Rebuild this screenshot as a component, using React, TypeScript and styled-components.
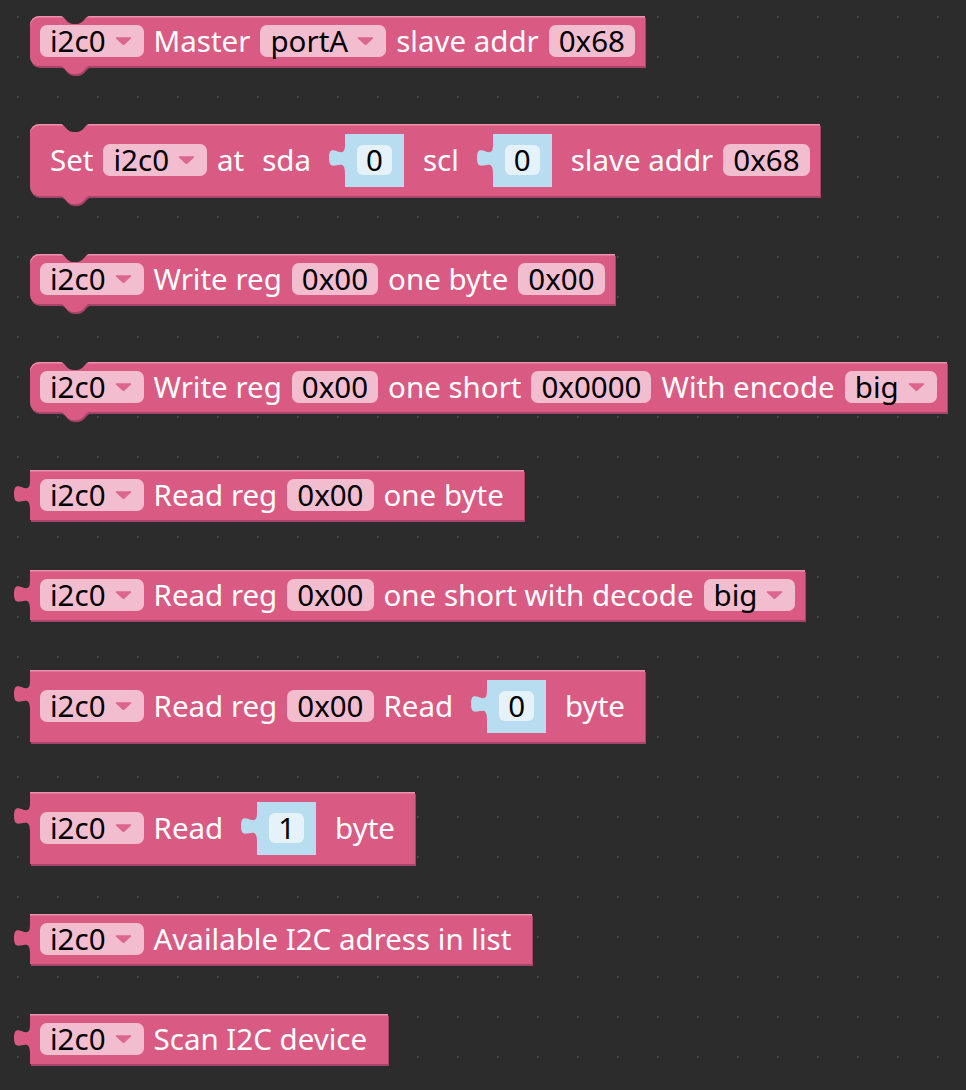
import React from "react";
import styled, { createGlobalStyle } from "styled-components";

const BG = "#2c2c2c";
const PINK = "#d95b84";
const PINK_LIGHT = "#ec91ae";
const PINK_DARK = "#a8446a";
const FIELD = "#f3bdd0";
const ARROW = "#dc6690";
const BLUE = "#b9ddf0";
const BLUE_FIELD = "#e6f2fa";
const FONT_SIZE = "29.5px";

const GlobalStyle = createGlobalStyle`
  html, body { margin: 0; padding: 0; background: ${BG}; }
  body { font-family: "Noto Sans", "Liberation Sans", sans-serif; }
  #root { width: 966px; height: 1090px; overflow: hidden; }
`;

const Workspace = styled.div`
  width: 966px;
  height: 1090px;
  box-sizing: border-box;
  background-color: ${BG};
  background-image: radial-gradient(circle, #474747 0.9px, transparent 1.3px);
  background-size: 40px 40px;
  background-position: -2px -3px;
  padding: 16px 0 0 30px;
  display: flex;
  flex-direction: column;
  align-items: flex-start;
  gap: 50px;
`;

type Kind = "statement" | "value";

const BlockBody = styled.div<{ $kind: Kind; $tall?: boolean; $padL: number; $padR: number }>`
  position: relative;
  display: flex;
  align-items: center;
  gap: 10px;
  height: ${(p) => (p.$tall ? 72 : 50)}px;
  padding: 0 ${(p) => p.$padR}px 0 ${(p) => p.$padL}px;
  background: ${PINK};
  border-radius: ${(p) => (p.$kind === "statement" ? "9px 0 0 9px" : "0")};
  box-shadow: inset 0 1.5px 0 ${PINK_LIGHT}, 1px 2px 0 ${PINK_DARK};
  margin-bottom: ${(p) => (p.$kind === "statement" ? 8 : 0)}px;
`;

const Notch = styled.svg`
  position: absolute;
  top: -1px;
  left: 28px;
  width: 34px;
  height: 10px;
`;

const BottomTab = styled.svg`
  position: absolute;
  bottom: -10px;
  left: 28px;
  width: 36px;
  height: 11px;
`;

const OutputTab = styled.svg`
  position: absolute;
  left: -17px;
  top: 11px;
  width: 18px;
  height: 30px;
`;

const Label = styled.span<{ $wide?: boolean }>`
  color: #ffffff;
  font-size: ${FONT_SIZE};
  line-height: 1;
  white-space: nowrap;
  margin-left: ${(p) => (p.$wide ? 8 : 0)}px;
`;

const FieldBox = styled.div<{ $drop?: boolean }>`
  display: flex;
  align-items: center;
  gap: 9px;
  height: 32px;
  padding: 0 ${(p) => (p.$drop ? 12 : 10)}px 0 10px;
  border-radius: 7px;
  background: ${FIELD};
  color: #000;
  font-size: ${FONT_SIZE};
  line-height: 1;
  white-space: nowrap;
`;

const Arrow = styled.svg`
  width: 17px;
  height: 8px;
  flex: none;
`;

const Slot = styled.div`
  position: relative;
  display: flex;
  align-items: center;
  height: 53px;
  padding: 0 12px;
  background: ${BLUE};
  margin-left: 24px;
  margin-right: 9px;
`;

const SlotTab = styled.svg`
  position: absolute;
  left: -17px;
  top: 11px;
  width: 18px;
  height: 30px;
`;

const SlotField = styled.div`
  display: flex;
  align-items: center;
  height: 30px;
  padding: 0 9px;
  border-radius: 6px;
  background: ${BLUE_FIELD};
  color: #000;
  font-size: ${FONT_SIZE};
  line-height: 1;
`;

const TAB_PATH = "M17,0 C17,18 1,-6 1,13 C1,31 17,9 17,28 Z";

const Dropdown: React.FC<{ text: string }> = ({ text }) => (
  <FieldBox $drop>
    <span>{text}</span>
    <Arrow viewBox="0 0 17 8">
      <path d="M1.5 1 L15.5 1 L8.5 7.5 Z" fill={ARROW} stroke={ARROW} strokeWidth="1.5" strokeLinejoin="round" />
    </Arrow>
  </FieldBox>
);

const Field: React.FC<{ text: string }> = ({ text }) => (
  <FieldBox>
    <span>{text}</span>
  </FieldBox>
);

const ValueInput: React.FC<{ text: string }> = ({ text }) => (
  <Slot>
    <SlotTab viewBox="0 0 18 30">
      <path d={TAB_PATH} fill={BLUE} />
    </SlotTab>
    <SlotField>{text}</SlotField>
  </Slot>
);

const Block: React.FC<{
  kind: Kind;
  tall?: boolean;
  padL?: number;
  padR?: number;
  children: React.ReactNode;
}> = ({ kind, tall, padL = 10, padR = 10, children }) => (
  <BlockBody $kind={kind} $tall={tall} $padL={padL} $padR={padR}>
    {kind === "statement" ? (
      <>
        <Notch viewBox="0 0 34 10">
          <path d="M0,0 C7,0 8,9 15,9 L19,9 C26,9 27,0 34,0 Z" fill={BG} />
        </Notch>
        <BottomTab viewBox="0 0 36 11">
          <path d="M0,2 C7,2 8,11 15,11 L19,11 C26,11 27,2 34,2 Z" fill={PINK_DARK} transform="translate(1,0)" />
          <path d="M0,0 C7,0 8,9 15,9 L19,9 C26,9 27,0 34,0 Z" fill={PINK} />
        </BottomTab>
      </>
    ) : (
      <OutputTab viewBox="0 0 18 30">
        <path d={TAB_PATH} fill={PINK} />
      </OutputTab>
    )}
    {children}
  </BlockBody>
);

export default function App() {
  return (
    <>
      <GlobalStyle />
      <Workspace>
        <Block kind="statement">
          <Dropdown text="i2c0" />
          <Label>Master</Label>
          <Dropdown text="portA" />
          <Label>slave addr</Label>
          <Field text="0x68" />
        </Block>

        <Block kind="statement" tall padL={20}>
          <Label>Set</Label>
          <Dropdown text="i2c0" />
          <Label>at</Label>
          <Label $wide>sda</Label>
          <ValueInput text="0" />
          <Label>scl</Label>
          <ValueInput text="0" />
          <Label>slave addr</Label>
          <Field text="0x68" />
        </Block>

        <Block kind="statement">
          <Dropdown text="i2c0" />
          <Label>Write reg</Label>
          <Field text="0x00" />
          <Label>one byte</Label>
          <Field text="0x00" />
        </Block>

        <Block kind="statement">
          <Dropdown text="i2c0" />
          <Label>Write reg</Label>
          <Field text="0x00" />
          <Label>one short</Label>
          <Field text="0x0000" />
          <Label>With encode</Label>
          <Dropdown text="big" />
        </Block>

        <Block kind="value" padR={20}>
          <Dropdown text="i2c0" />
          <Label>Read reg</Label>
          <Field text="0x00" />
          <Label>one byte</Label>
        </Block>

        <Block kind="value">
          <Dropdown text="i2c0" />
          <Label>Read reg</Label>
          <Field text="0x00" />
          <Label>one short with decode</Label>
          <Dropdown text="big" />
        </Block>

        <Block kind="value" tall padR={20}>
          <Dropdown text="i2c0" />
          <Label>Read reg</Label>
          <Field text="0x00" />
          <Label>Read</Label>
          <ValueInput text="0" />
          <Label>byte</Label>
        </Block>

        <Block kind="value" tall padR={20}>
          <Dropdown text="i2c0" />
          <Label>Read</Label>
          <ValueInput text="1" />
          <Label>byte</Label>
        </Block>

        <Block kind="value" padR={21}>
          <Dropdown text="i2c0" />
          <Label>Available I2C adress in list</Label>
        </Block>

        <Block kind="value" padR={21}>
          <Dropdown text="i2c0" />
          <Label>Scan I2C device</Label>
        </Block>
      </Workspace>
    </>
  );
}
